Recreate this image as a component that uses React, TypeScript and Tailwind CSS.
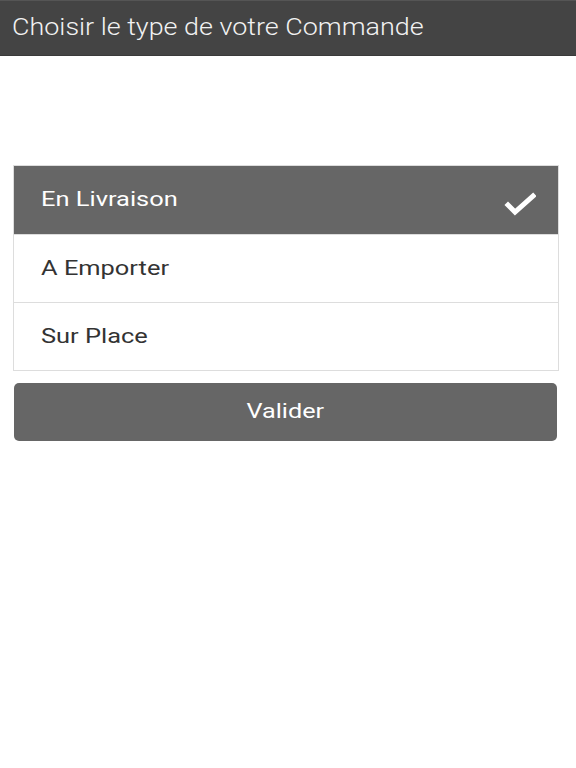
import React from "react";

export default function App() {
  const items = ["En Livraison", "A Emporter", "Sur Place"];
  return (
    <div className="w-[576px] h-[768px] bg-white" style={{ fontFamily: "Roboto, 'Noto Sans', sans-serif" }}>
      <div className="h-[56px] bg-[#444444] border-t border-[#555] border-b border-b-[#3a3a3a] flex items-center pl-[12px]">
        <span className="inline-block origin-left scale-x-[1.17] text-[23px] text-[#f2f2f2] font-light whitespace-nowrap">Choisir le type de votre Commande</span>
      </div>
      <div className="pl-[13px] pr-[17px] pt-[109px]">
        <div className="border border-[#dddddd]">
          {items.map((t, i) => (
            <div
              key={t}
              className={
                i === 0
                  ? "h-[68px] bg-[#666666] flex items-center justify-between pl-[27px] pr-[22px]"
                  : "h-[68px] bg-white border-t border-[#dddddd] flex items-center justify-between pl-[27px] pr-[22px]"
              }
            >
              <span className={i === 0 ? "inline-block origin-left scale-x-[1.21] text-[21px] text-white whitespace-nowrap" : "inline-block origin-left scale-x-[1.21] text-[21px] text-[#333333] whitespace-nowrap"}>{t}</span>
              {i === 0 && (
                <svg width="32" height="24" viewBox="0 0 32 24" className="mt-[8px]">
                  <path d="M4 13 L11 20 L29 4" stroke="white" strokeWidth="5" fill="none" strokeLinecap="square" />
                </svg>
              )}
            </div>
          ))}
        </div>
        <button className="mt-[12px] ml-[1px] w-[543px] h-[58px] rounded-[5px] bg-[#666666] text-white text-[21px] flex items-center justify-center">
          <span className="inline-block scale-x-[1.2]">Valider</span>
        </button>
      </div>
    </div>
  );
}
